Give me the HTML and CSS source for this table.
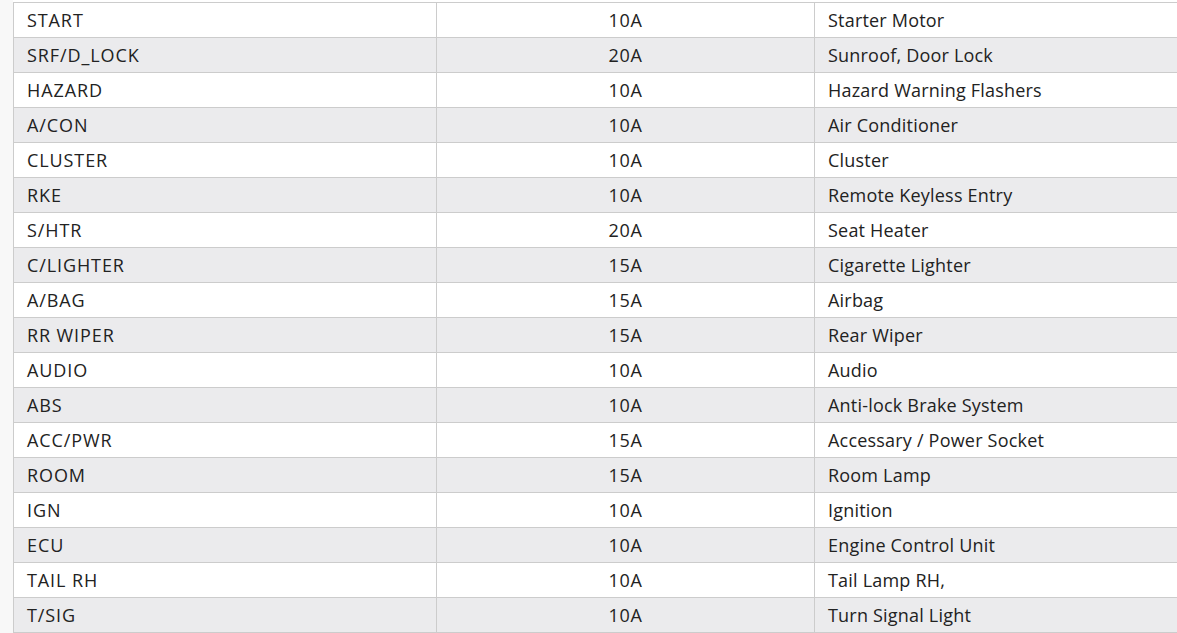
FILE: index.html
```html
<!DOCTYPE html>
<html>
<head>
<meta charset="utf-8">
<link rel="stylesheet" href="styles.css">
</head>
<body>
<div class="page">
<div class="gutter"></div>
<div class="wrap">
<table class="fuse">
<colgroup><col class="c1"><col class="c2"><col class="c3"></colgroup>
<tbody>
<tr><td class="name">START</td><td class="amp">10A</td><td class="desc">Starter Motor</td></tr>
<tr><td class="name">SRF/D_LOCK</td><td class="amp">20A</td><td class="desc">Sunroof, Door Lock</td></tr>
<tr><td class="name">HAZARD</td><td class="amp">10A</td><td class="desc">Hazard Warning Flashers</td></tr>
<tr><td class="name">A/CON</td><td class="amp">10A</td><td class="desc">Air Conditioner</td></tr>
<tr><td class="name">CLUSTER</td><td class="amp">10A</td><td class="desc">Cluster</td></tr>
<tr><td class="name">RKE</td><td class="amp">10A</td><td class="desc">Remote Keyless Entry</td></tr>
<tr><td class="name">S/HTR</td><td class="amp">20A</td><td class="desc">Seat Heater</td></tr>
<tr><td class="name">C/LIGHTER</td><td class="amp">15A</td><td class="desc">Cigarette Lighter</td></tr>
<tr><td class="name">A/BAG</td><td class="amp">15A</td><td class="desc">Airbag</td></tr>
<tr><td class="name">RR WIPER</td><td class="amp">15A</td><td class="desc">Rear Wiper</td></tr>
<tr><td class="name">AUDIO</td><td class="amp">10A</td><td class="desc">Audio</td></tr>
<tr><td class="name">ABS</td><td class="amp">10A</td><td class="desc">Anti-lock Brake System</td></tr>
<tr><td class="name">ACC/PWR</td><td class="amp">15A</td><td class="desc">Accessary / Power Socket</td></tr>
<tr><td class="name">ROOM</td><td class="amp">15A</td><td class="desc">Room Lamp</td></tr>
<tr><td class="name">IGN</td><td class="amp">10A</td><td class="desc">Ignition</td></tr>
<tr><td class="name">ECU</td><td class="amp">10A</td><td class="desc">Engine Control Unit</td></tr>
<tr><td class="name">TAIL RH</td><td class="amp">10A</td><td class="desc">Tail Lamp RH,</td></tr>
<tr><td class="name">T/SIG</td><td class="amp">10A</td><td class="desc">Turn Signal Light</td></tr>
</tbody>
</table>
</div>
</div>
</body>
</html>
```
FILE: styles.css
```css
html, body {
  margin: 0;
  padding: 0;
  background: #ffffff;
  overflow: hidden;
  height: 633px;
}
.page {
  display: flex;
  height: 633px;
}
.gutter {
  width: 13px;
  flex: none;
  background: #f8f8f8;
}
.wrap {
  flex: 1;
  overflow: hidden;
  padding-top: 2px;
  background: #fff;
}
.fuse {
  border-collapse: collapse;
  table-layout: fixed;
  width: 1250px;
  font-family: "Open Sans", "Noto Sans", Arial, sans-serif;
  font-size: 18px;
  color: #222222;
}
.c1 { width: 423px; }
.c2 { width: 378px; }
.c3 { width: 449px; }
.fuse td {
  height: 34px;
  padding: 0 13px;
  border: 1px solid #cccccc;
  vertical-align: middle;
  line-height: 20px;
  white-space: nowrap;
}
.fuse tr:nth-child(even) td {
  background: #ebebed;
}
.fuse td.name {
  letter-spacing: 0.9px;
}
.fuse td.amp {
  text-align: center;
  letter-spacing: 0.6px;
}
.fuse td.desc {
  letter-spacing: 0.2px;
}
```
